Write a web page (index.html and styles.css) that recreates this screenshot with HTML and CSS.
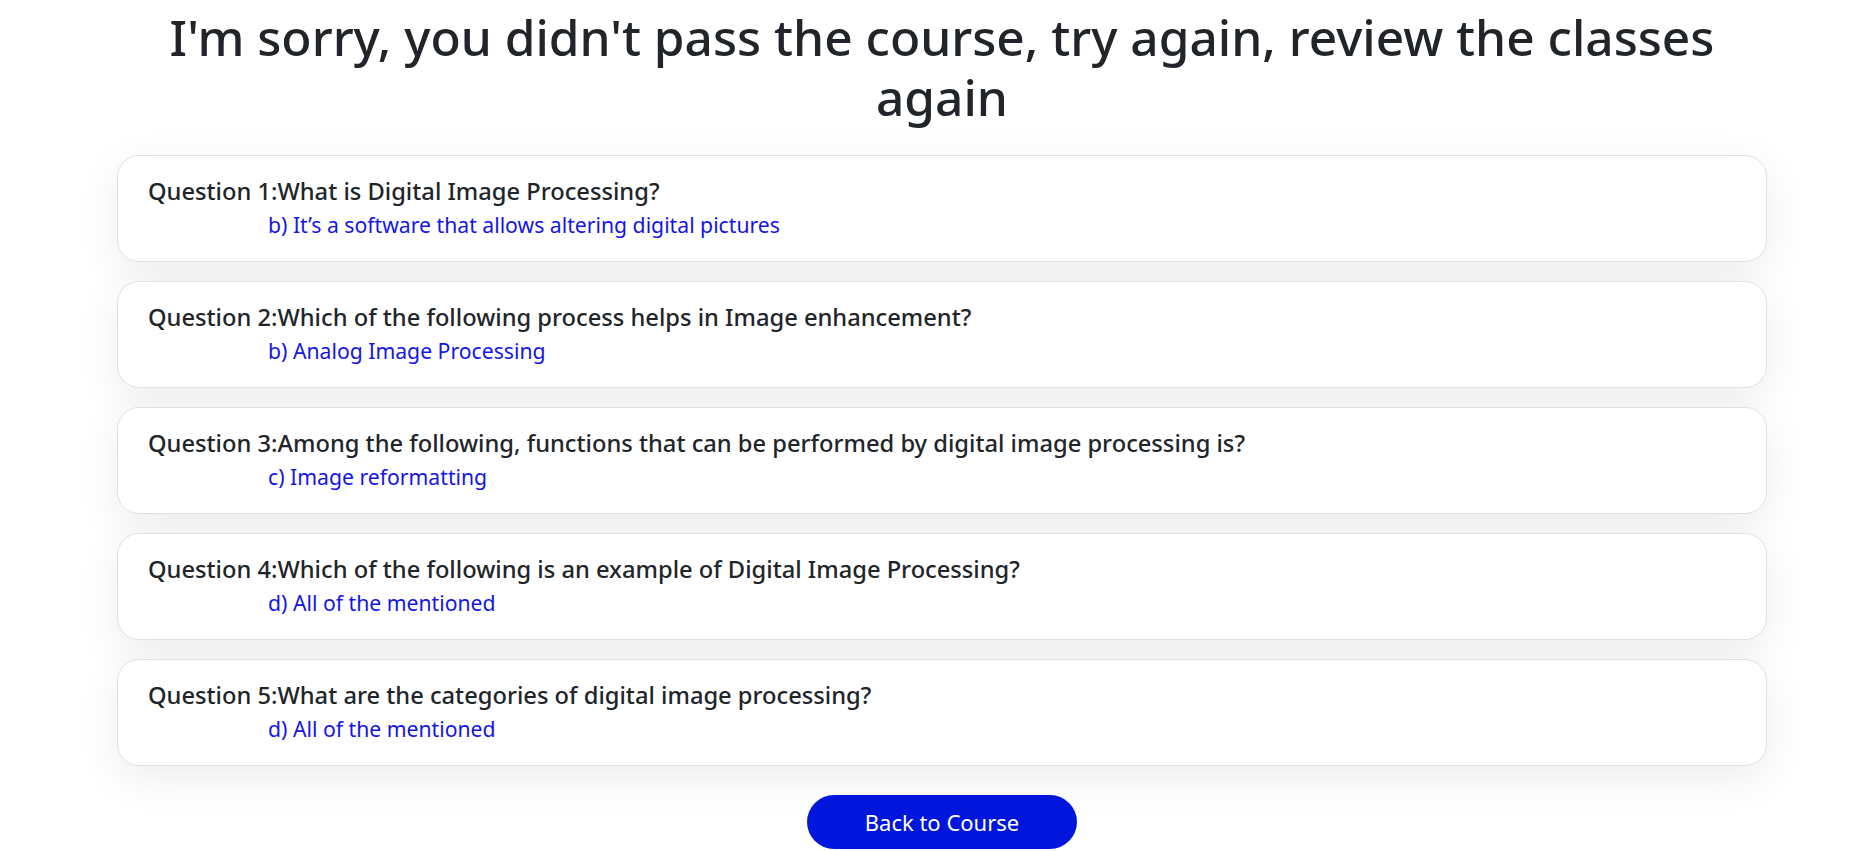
FILE: index.html
```html
<!DOCTYPE html>
<html lang="en">
<head>
<meta charset="utf-8">
<title>Course result</title>
<link rel="stylesheet" href="styles.css">
</head>
<body>
<main class="page">
  <h1 class="title">I'm sorry, you didn't pass the course, try again, review the classes again</h1>
  <section class="results">
    <article class="card">
      <h5 class="question">Question 1:What is Digital Image Processing?</h5>
      <p class="answer">b) It’s a software that allows altering digital pictures</p>
    </article>
    <article class="card">
      <h5 class="question">Question 2:Which of the following process helps in Image enhancement?</h5>
      <p class="answer">b) Analog Image Processing</p>
    </article>
    <article class="card">
      <h5 class="question">Question 3:Among the following, functions that can be performed by digital image processing is?</h5>
      <p class="answer">c) Image reformatting</p>
    </article>
    <article class="card">
      <h5 class="question">Question 4:Which of the following is an example of Digital Image Processing?</h5>
      <p class="answer">d) All of the mentioned</p>
    </article>
    <article class="card">
      <h5 class="question">Question 5:What are the categories of digital image processing?</h5>
      <p class="answer">d) All of the mentioned</p>
    </article>
  </section>
  <div class="actions">
    <a class="btn-back" href="#">Back to Course</a>
  </div>
</main>
</body>
</html>
```
FILE: styles.css
```css
html, body {
  margin: 0;
  padding: 0;
  background: #ffffff;
}

body {
  font-family: "Noto Sans", "Open Sans", sans-serif;
  color: #212529;
  overflow: hidden;
}

.page {
  padding: 0 105px 0 117px;
}

.title {
  margin: 7px 0 0;
  font-size: 49.6px;
  line-height: 60px;
  font-weight: 500;
  text-align: center;
  color: #212529;
}

.results {
  margin-top: 28px;
  display: flex;
  flex-direction: column;
  gap: 19px;
}

.card {
  background: #ffffff;
  border: 1px solid #dee2e6;
  border-radius: 22px;
  padding: 20px 30px 21px;
  box-shadow: 0 12px 45px rgba(0, 0, 0, 0.075);
}

.question {
  margin: 0;
  font-size: 23.7px;
  line-height: 30px;
  font-weight: 500;
  color: #212529;
}

.answer {
  margin: 4px 0 0 120px;
  font-size: 21.2px;
  line-height: 30px;
  color: #1515e8;
}

.actions {
  display: flex;
  justify-content: center;
  margin-top: 29px;
}

.btn-back {
  display: inline-block;
  background: #0016dc;
  color: #ffffff;
  text-decoration: none;
  font-size: 22px;
  line-height: 30px;
  padding: 12px 58px;
  border-radius: 30px;
}
```
